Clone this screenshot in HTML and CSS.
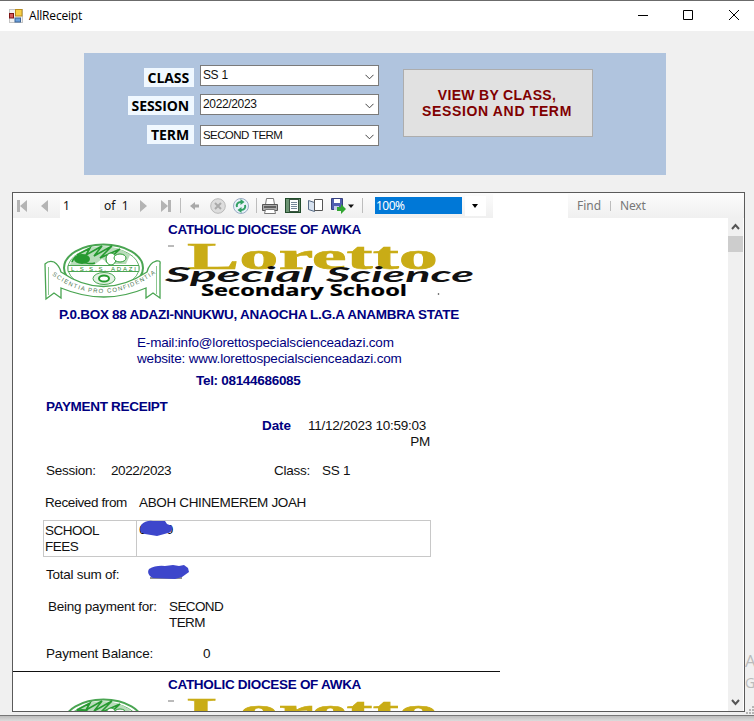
FILE: index.html
```html
<!DOCTYPE html>
<html lang="en">
<head>
<meta charset="utf-8">
<title>AllReceipt</title>
<link rel="stylesheet" href="styles.css">
</head>
<body>
<div class="window">
  <header class="titlebar">
    <svg class="app-icon" width="14" height="14" viewBox="0 0 14 14">
      <rect x=".5" y=".5" width="13" height="13" fill="#f2f2f2" stroke="#c4c4c4"/>
      <rect x="6.5" y=".5" width="6.5" height="6.5" fill="#f7cf45" stroke="#b98d1d"/>
      <rect x=".5" y="4.5" width="4" height="4.5" fill="#d65a5a" stroke="#7e1414"/>
      <rect x="6" y="9" width="5.5" height="4" fill="#6ba0dc" stroke="#3d6596"/>
    </svg>
    <span class="title">AllReceipt</span>
    <svg class="controls" width="104" height="14" viewBox="0 0 104 14" fill="none" stroke="#000">
      <path d="M0 6.500h10M45.500 1.500h9v9h-9zM91 1l10 10M101 1l-10 10"/>
    </svg>
  </header>

  <section class="filters">
    <div class="fields">
      <label class="tag">CLASS</label>
      <div class="combo"><span class="t-ss">SS 1</span><svg width="9" height="6"><path d="M.5 .8l4 4 4-4"/></svg></div>
      <label class="tag t-session">SESSION</label>
      <div class="combo"><span class="t-year">2022/2023</span><svg width="9" height="6"><path d="M.5 .8l4 4 4-4"/></svg></div>
      <label class="tag t-last">TERM</label>
      <div class="combo"><span class="t-term">SECOND TERM</span><svg width="9" height="6"><path d="M.5 .8l4 4 4-4"/></svg></div>
    </div>
    <button class="view-button"><span>VIEW BY CLASS,</span><span class="second">SESSION AND TERM</span></button>
  </section>

  <main class="viewer">
    <div class="toolbar">
      <svg class="nav" width="47" height="24" fill="#b4b4b4"><path d="M4 6h3v12H4zM14 6v12L7 12zM35 6v12l-7-6z"/></svg>
      <span class="page-box">1</span>
      <span class="of">of&nbsp; 1</span>
      <svg width="40" height="24" fill="#b4b4b4"><path d="M5 6v12l7-6zM26 6v12l7-6zM33 6h3v12h-3z"/></svg>
      <i class="sep"></i>
      <svg class="actions" width="70" height="24" viewBox="0 0 70 24">
        <path d="M8 12l5-4v2.500h4v3h-4V16z" fill="#a9a9a9"/>
        <circle cx="36" cy="12" r="7.300" fill="#ddd" stroke="#b9b9b9"/>
        <path d="M33 9l6 6M39 9l-6 6" stroke="#aaa" stroke-width="2"/>
        <circle cx="59" cy="12" r="7.500" fill="#e9f2fa" stroke="#9aacc4"/>
        <path d="M55 13c-1-3 1-5 4-5M63 11c1 3-1 5-4 5" fill="none" stroke="#31a063" stroke-width="2"/>
        <path d="M58.500 5l4 3-4 3zM59.500 13l-4 3 4 3z" fill="#31a063"/>
      </svg>
      <i class="sep sep-print"></i>
      <svg class="docs" width="96" height="24" viewBox="0 0 96 24">
        <path d="M8.500 4.500h7l1 6h-9z" fill="#fff" stroke="#777"/>
        <path d="M4.500 10.500h15v6h-15z" fill="#aaa" stroke="#555"/>
        <path d="M6 13h12" stroke="#444" stroke-width="1.500"/>
        <path d="M7.500 15.500h9l1 4h-11z" fill="#fff" stroke="#777"/>
        <rect x="27.500" y="4.500" width="15" height="14" fill="#6c9473" stroke="#224c2c"/>
        <rect x="31.500" y="5.500" width="9" height="12" fill="#fff" stroke="#395540"/>
        <path d="M33 8.500h6M33 10.500h6M33 12.500h6M33 14.500h6" stroke="#789"/>
        <path d="M50.500 6.500l6 2v9l-6-2z" fill="#d7e2f0" stroke="#566b86"/>
        <path d="M56.500 5.500h8v11h-8z" fill="#fff" stroke="#555"/>
        <path d="M73.500 4.500h11v11h-11z" fill="#4f5db0" stroke="#36407f"/>
        <path d="M76 5h6v4h-6z" fill="#fff"/><path d="M76 12h5v4h-5z" fill="#c5cae9"/>
        <path d="M79 13h4v-3l5 5-5 5v-3h-4z" fill="#32a532"/>
        <path d="M90 10.500h6l-3 3.500z" fill="#111"/>
      </svg>
      <i class="sep sep-zoom"></i>
      <span class="zoom">100%</span>
      <svg class="zoom-arrow" width="21" height="20"><path d="M7 8h6l-3 4z"/></svg>
      <span class="search"></span>
      <span class="find">Find</span>
      <i class="sep sep-find"></i>
      <span class="next">Next</span>
    </div>
    <div class="content">
      <div class="report">
        <article class="receipt">
          <div class="head"><b class="diocese">CATHOLIC DIOCESE OF AWKA</b></div>
          <svg class="logo" width="440" height="64" viewBox="40 239 440 64">
            <defs>
              <path id="ribbon" d="M52 275Q102 312 156 273"/>
              <g id="brand">
                <ellipse cx="103.500" cy="268" rx="39.500" ry="23.500" fill="#fff" stroke="#4aa552" stroke-width="2"/>
                <ellipse cx="103.500" cy="268" rx="35.500" ry="20.500" fill="#fff" stroke="#63b56a"/>
                <path d="M72 259Q84 246 101 246Q119 246 130 255L126 264H110L102 259L94 265H70Z" fill="#b8dcba"/>
                <path d="M77 255l13-7-4 7 16-9-8 10 18-10-12 12 20-9-14 13M72 262q4-9 8-2 6 5 15 3" fill="none" stroke="#269a30" stroke-width="1.600"/>
                <ellipse cx="82" cy="259" rx="8" ry="5" fill="#269a30"/>
                <ellipse cx="111" cy="259" rx="5" ry="6" fill="#fff" stroke="#269a30"/>
                <ellipse cx="120" cy="258" rx="6" ry="4" fill="#fff" stroke="#269a30"/>
                <path d="M68 265.500h71v6H68z" fill="#fff" stroke="#4aa552"/>
                <text x="71" y="271" class="crest" textLength="65">L.S.S.S. ADAZI</text>
                <ellipse cx="104" cy="278.500" rx="11" ry="6" fill="#e4f2e4" stroke="#4aa552"/>
                <ellipse cx="104" cy="278.500" rx="5" ry="3" fill="#fff" stroke="#269a30" stroke-width="2"/>
                <path d="M45 264q4-4 9-2 5 3 7 10 42 29 86 0 2-9 9-11 5-1 4 3v34l-7-5-7 5v-10Q104 306 61 288v10l-7-5-8 6z" fill="#fff" stroke="#4aa552" stroke-width="1.300"/>
                <path d="M48.500 267v28M156.500 266v28" stroke="#8cc791"/>
                <text class="motto"><textPath href="#ribbon" textLength="112">SCIENTIA PRO CONFIDENTIA</textPath></text>
                <path d="M168 246h6" stroke="#777"/>
                <text x="187" y="269" class="loretto" textLength="251" lengthAdjust="spacingAndGlyphs">Loretto</text>
                <text x="165" y="282" class="special" textLength="148" lengthAdjust="spacingAndGlyphs">Special</text>
                <text x="326" y="282" class="special" textLength="148" lengthAdjust="spacingAndGlyphs">Science</text>
                <text x="201" y="295.500" class="school" textLength="206" lengthAdjust="spacingAndGlyphs">Secondary School</text>
                <circle cx="438.500" cy="294" r=".8" fill="#333"/>
              </g>
            </defs>
            <use href="#brand"/>
          </svg>
          <b class="address">P.0.BOX 88 ADAZI-NNUKWU, ANAOCHA L.G.A ANAMBRA STATE</b>
          <div class="contact"><span class="email">E-mail:info@lorettospecialscienceadazi.com</span><span class="web">website: www.lorettospecialscienceadazi.com</span></div>
          <b class="tel">Tel: 08144686085</b>
          <b class="heading">PAYMENT RECEIPT</b>
          <div class="date"><b>Date</b><div class="stamp"><span class="when">11/12/2023 10:59:03</span><span>PM</span></div></div>
          <div class="row session"><span class="k">Session:</span><span class="v">2022/2023</span><span class="ck">Class:</span><span>SS 1</span></div>
          <div class="row received"><span class="k">Received from</span><span class="v">ABOH CHINEMEREM JOAH</span></div>
          <div class="fees"><div>SCHOOL<br>FEES</div><div><svg width="37" height="18"><text x="1" y="14" font-size="13">6</text><text x="28" y="14" font-size="13">0</text><path d="M3 5Q8 0 15 1L27 1 29 4 34 6Q35 12 30 13L19 16 7 14Q0 13 3 5Z" fill="#3d46cb"/></svg></div></div>
          <div class="row total"><span class="k">Total sum of:</span><svg width="43" height="17"><path d="M3 14h32" stroke="#222"/><path d="M2 5Q9 1 18 2L26 1 32 2 37 1 41 4 42 8 35 13 28 15 6 14Q-1 10 2 5Z" fill="#3d46cb"/></svg></div>
          <div class="row being"><span class="k">Being payment for:</span><span class="v">SECOND<br>TERM</span></div>
          <div class="row balance"><span class="k">Payment Balance:</span><span>0</span></div>
          <div class="rule"></div>
        </article>
        <article class="receipt">
          <div class="head"><b class="diocese">CATHOLIC DIOCESE OF AWKA</b></div>
          <svg class="logo" width="440" height="64" viewBox="40 239 440 64"><use href="#brand"/></svg>
        </article>
      </div>
      <div class="scrollbar">
        <svg width="15" height="18"><path d="M4 11l3.500-4 3.500 4"/></svg>
        <div class="thumb"></div>
        <svg class="down" width="15" height="18"><path d="M4 7l3.500 4 3.500-4"/></svg>
      </div>
    </div>
  </main>
  <div class="watermark"><span>A</span><span class="go">G</span></div>
  <svg class="grip" width="8" height="8" fill="#b5b5b5"><path d="M6 0h2v2H6zM3 3h2v2H3zM6 3h2v2H6zM0 6h2v2H0zM3 6h2v2H3zM6 6h2v2H6z"/></svg>
</div>
</body>
</html>
```
FILE: styles.css
```css
* { box-sizing: border-box; }
body {
  margin: 0;
  height: 721px;
  overflow: hidden;
  background: linear-gradient(#bdbdbd 716px, #dcdcdc 721px);
  font-family: "Liberation Sans", sans-serif;
  color: #111;
}
.window {
  position: relative;
  height: 716px;
  overflow: hidden;
  background: #f0f0f0;
  border-top: 1px solid #6b6b6b;
  border-bottom: 1px solid #777;
}
.titlebar {
  display: flex;
  align-items: center;
  height: 30px;
  padding: 0 0 1px 9px;
  background: #fff;
}
.title { margin-left: 6px; font: 12px "Open Sans", sans-serif; letter-spacing: -.18px; color: #000; }
.controls { margin: 0 12px 0 auto; }

.filters {
  display: flex;
  width: 582px;
  height: 122px;
  margin: 22px 0 0 84px;
  background: #b0c4de;
}
.fields {
  display: grid;
  grid-template-columns: 110px 179px;
  grid-template-rows: 29px 31px 21px;
  align-content: start;
  align-items: start;
  column-gap: 6px;
  justify-items: end;
  padding-top: 12px;
}
.tag {
  height: 19px;
  margin-top: 3px;
  padding: 0 5px 0 4px;
  background: #f0f8ff;
  font: bold 14px/20px "Open Sans", sans-serif;
  letter-spacing: -.1px;
  color: #000;
}
.t-session { margin-top: 2px; }
.t-last { margin-top: 0; }
.combo {
  display: flex;
  justify-content: space-between;
  width: 179px;
  height: 21px;
  padding: 0 4px 0 2px;
  background: #fff;
  border: 1px solid #7a7a7a;
  font-size: 12px;
  line-height: 18px;
}
.combo svg { margin-top: 8px; fill: none; stroke: #444; }
.t-ss { letter-spacing: -.6px; word-spacing: 1px; }
.t-year { letter-spacing: -.35px; }
.t-term { font-size: 11.500px; letter-spacing: -.6px; word-spacing: 1px; }
.view-button {
  display: flex;
  flex-direction: column;
  align-items: center;
  justify-content: center;
  width: 190px;
  height: 68px;
  margin: 16px 0 0 24px;
  padding: 0 2px 0 0;
  background: #e1e1e1;
  border: 1px solid #adadad;
  font: bold 14px/16px "Liberation Sans", sans-serif;
  letter-spacing: .3px;
  color: #800000;
}
.second { letter-spacing: .65px; }

.viewer {
  width: 733px;
  height: 520px;
  margin: 17px 0 0 12px;
  background: #fff;
  border: 1px solid #5a5a5a;
  overflow: hidden;
}
.toolbar {
  display: flex;
  align-items: center;
  height: 25px;
  background: linear-gradient(#fcfcfc, #f0f0f0);
  font: 12px/18px "Noto Sans", sans-serif;
  color: #111;
}
.toolbar svg { flex: none; }
.page-box { width: 40px; height: 24px; padding: 3px 0 0 3px; background: #fff; }
.of { width: 35px; padding-left: 4px; white-space: nowrap; }
.sep { width: 1px; height: 15px; margin-left: 5px; background: #bdbdbd; }
.actions { margin-left: 1px; }
.sep-print { margin-left: 4px; }
.docs { margin-left: 1px; }
.sep-zoom { margin-left: 8px; }
.zoom { width: 87px; height: 17px; margin-left: 12px; padding-left: 1px; background: #0078d7; color: #fff; line-height: 17px; letter-spacing: -.5px; }
.zoom-arrow { margin-left: 3px; background: #fff; }
.search { width: 75px; height: 24px; margin-left: 7px; background: #fff; }
.find, .next { color: #777; }
.find { width: 28px; margin-left: 9px; }
.next { margin-left: 9px; letter-spacing: -.2px; }
.sep-find { height: 10px; }

.content { display: flex; height: 493px; }
.report { width: 715px; height: 493px; overflow: hidden; font-size: 13.500px; letter-spacing: -.25px; line-height: 16px; white-space: nowrap; }
.receipt { display: flex; flex-direction: column; height: 455px; padding-top: 4px; }
.receipt > * { flex: none; }
.receipt b { color: #000080; letter-spacing: -.3px; }
.head { padding-left: 155px; height: 16px; }
.receipt .address { letter-spacing: -.27px; }
.logo { margin: 1px 0 0 27px; letter-spacing: 0; }
.crest { font: 6px "Liberation Sans", sans-serif; fill: #1f8829; }
.motto { font: 6px "Liberation Sans", sans-serif; fill: #4d7551; }
.loretto { font: bold 37px "Liberation Serif", serif; fill: #c9ac16; stroke: #c9ac16; stroke-width: .6px; }
.special { font: italic bold 20px Lato, sans-serif; fill: #111; }
.school { font: bold 15.500px "Open Sans", sans-serif; fill: #000; stroke: #000; stroke-width: .2px; }
.address { margin: 4px 0 0 46px; }
.contact { display: flex; flex-direction: column; margin-top: 12px; padding-left: 124px; color: #000080; letter-spacing: -.18px; }
.tel { margin: 6px 0 0 183px; }
.heading { margin: 10px 0 0 33px; }
.date { display: flex; margin-top: 3px; padding-left: 249px; }
.date b { width: 46px; }
.receipt .date b { letter-spacing: -.1px; }
.stamp { display: flex; flex-direction: column; align-items: flex-end; width: 122px; }
.when { padding-right: 4px; }
.row { display: flex; }
.session { margin-top: 13px; padding-left: 33px; }
.session .k { width: 65px; }
.session .v { width: 163px; letter-spacing: -.4px; }
.session .ck { width: 48px; }
.received { margin-top: 16px; padding-left: 32px; }
.received .k { width: 94px; letter-spacing: -.4px; }
.received .v { letter-spacing: -.35px; }
.fees {
  display: grid;
  grid-template-columns: 92px 1fr;
  width: 388px;
  height: 37px;
  margin: 9px 0 0 30px;
  border: 1px solid #c8c8c8;
}
.fees > div { padding: 2px 1px 0; letter-spacing: -.5px; }
.fees > div + div { padding: 0 0 0 1px; border-left: 1px solid #c8c8c8; }
.fees svg { display: block; margin-top: -1px; }
.total { height: 16px; margin-top: 10px; padding-left: 33px; }
.total .k { width: 101px; }
.total svg { margin-top: -3px; }
.being { margin-top: 16px; padding-left: 35px; }
.being .k { width: 121px; }
.being .v { letter-spacing: -.6px; }
.balance { margin-top: 15px; padding-left: 33px; letter-spacing: -.15px; }
.balance .k { width: 157px; }
.rule { width: 487px; height: 1px; margin-top: 9px; background: #111; }

.scrollbar { display: flex; flex-direction: column; width: 15px; height: 493px; background: #f0f0f0; }
.scrollbar svg { flex: none; fill: none; stroke: #555; stroke-width: 2; }
.thumb { height: 16px; background: #cdcdcd; }
.down { margin-top: auto; }
.watermark { position: absolute; left: 745px; top: 649px; display: flex; flex-direction: column; font: 17px/22px "Open Sans", sans-serif; color: #bbb; }
.watermark .go { font-size: 14px; }
.grip { position: absolute; right: 0; bottom: 1px; }
```
